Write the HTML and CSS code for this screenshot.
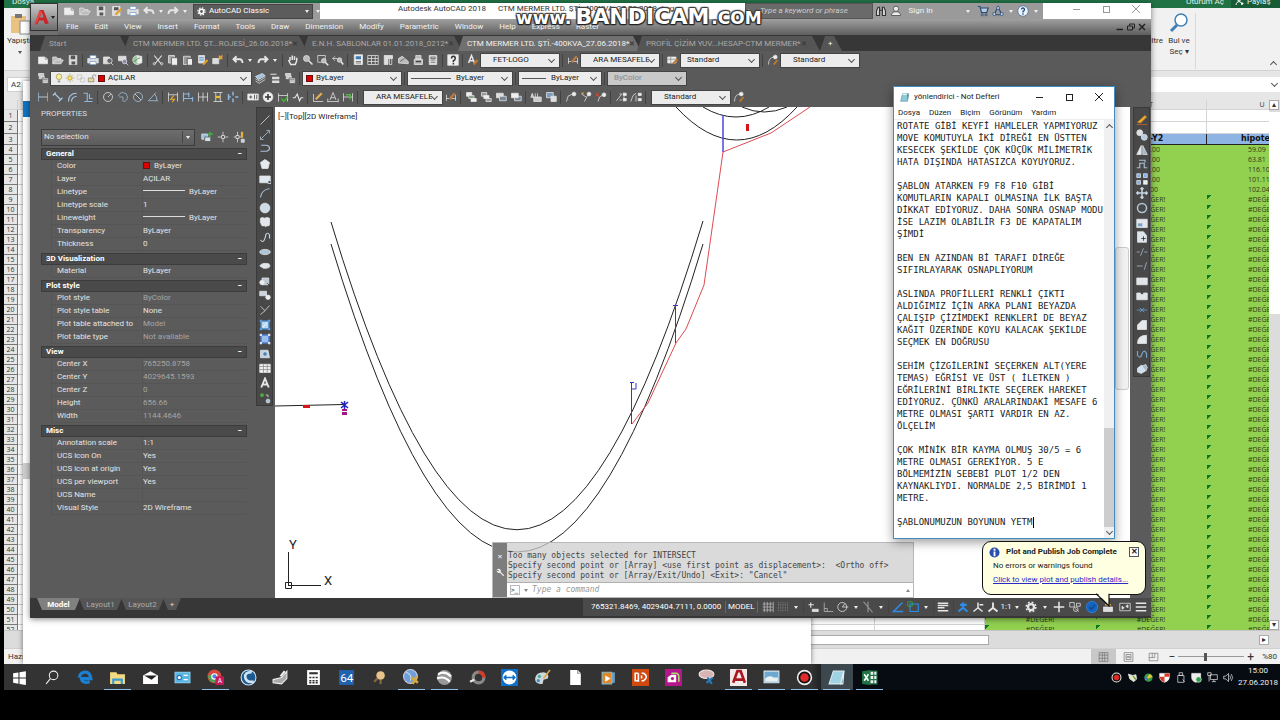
FILE: index.html
```html
<!DOCTYPE html>
<html lang="tr">
<head>
    <meta charset="UTF-8">
    <meta name="viewport" content="width=device-width, initial-scale=1.0">
    <title>Autodesk AutoCAD 2018</title>
    <link rel="stylesheet" href="styles.css">
</head>
<body>
    <div class="desktop">

        <!-- Excel -->
        <section class="window excel">
            <div class="excel-title">
                <span>Dosya</span>
                <span class="signin">Oturum Aç</span>
                <span class="share"><svg viewBox="0 0 16 16"><circle cx="7" cy="3" r="3"/><path d="M1 14c1-9 11-9 12 0M11 11h5M13 8v6"/></svg>Paylaş</span>
            </div>
            <div class="ribbon">
                <button class="paste">
                    <svg viewBox="0 0 22 22"><rect x="2" y="3" width="15" height="17" fill="#eac282"/><rect x="6" y="1" width="7" height="4" fill="#777"/><rect x="11" y="8" width="10" height="13" fill="#fff" stroke="#888"/></svg>
                    Yapıştır<i class="arrow dark"></i>
                </button>
                <span class="filter">Filtre</span>
                <button class="find">
                    <svg viewBox="0 0 20 20"><circle cx="12" cy="7" r="6" fill="#fff" stroke="#3f7fb5" stroke-width="1.5"/><path d="M8 12L2 18" stroke="#3f7fb5" stroke-width="3"/></svg>
                    <span>Bul ve<br>Seç ▾</span>
                </button>
                <i class="chevron up"></i>
            </div>
            <div class="formula"><input class="name-box" aria-label="Ad kutusu" value="A2"><div class="formula-text"><i class="chevron"></i></div></div>
            <div class="sheet-area">
                <div class="sheet"><table id="sheet"></table></div>
                <div class="vscroll"><button aria-label="yukarı">▴</button><div class="vthumb"></div><button aria-label="aşağı">▾</button></div>
            </div>
            <div class="hscroll"><div class="hthumb"></div><button aria-label="sağa">▸</button></div>
            <div class="excel-status">
                <span>Hazır</span>
                <div class="views" data-icons="normal page breaks"></div>
                <span class="zoom-sign">−</span><input type="range" class="zoom" aria-label="Yakınlaştırma" value="40"><span class="zoom-sign">+</span>
                <span class="zoom-value">%80</span>
            </div>
        </section>

        <section class="window blank-doc"><div class="blue"></div><div class="scroll-bit"></div></section>

        <!-- AutoCAD -->
        <section class="window acad">
            <header class="acad-head">
                <button class="logo" aria-label="AutoCAD"><svg viewBox="0 0 24 26"><path d="M2 22L9 3h5l7 18-5 1-2-5H8l-2 5z" fill="#c9252b"/><path d="M9 13l3-7 2 7z" fill="#8d8d8d"/><path d="M9 3l3 3-8 16-2 0z" fill="#e8473f"/></svg><i class="arrow"></i></button>
                <div class="head-rows">
                    <div class="titlebar">
                        <div class="qat">
                            <div class="tools" data-icons="new open save saveas print undo , redo ,"></div>
                            <label class="workspace"><svg viewBox="0 0 16 16"><circle cx="8" cy="8" r="4" fill="none" stroke="#fff" stroke-width="3"/><circle cx="8" cy="8" r="6.5" fill="none" stroke="#fff" stroke-width="2" stroke-dasharray="2.6 2.5"/></svg><select aria-label="Workspace"><option>AutoCAD Classic</option></select><i class="arrow"></i></label>
                            <i class="arrow"></i>
                        </div>
                        <div class="title"><span>Autodesk AutoCAD 2018</span><span>CTM MERMER LTD. ŞTİ.-400KVA_27.06.2018.dwg</span></div>
                        <div class="search"><i>▸</i><input aria-label="Search" placeholder="Type a keyword or phrase"></div>
                        <div class="signin-bar">
                            <div class="tools" data-icons="binocular user"></div>
                            <span class="sign">Sign In</span><i class="arrow"></i>
                            <div class="tools" data-icons="cart a360 , qmark ,"></div>
                        </div>
                        <div class="win-buttons"><button aria-label="Minimize"><i class="min"></i></button><button aria-label="Maximize"><i class="max"></i></button><button aria-label="Close"><i class="close"></i></button></div>
                    </div>
                    <nav class="menubar">
                        <button>File</button><button>Edit</button><button>View</button><button>Insert</button><button>Format</button><button>Tools</button><button>Draw</button><button>Dimension</button><button>Modify</button><button>Parametric</button><button>Window</button><button>Help</button><button>Express</button><button>Raster</button>
                        <div class="doc-buttons" data-icons="mini restore closex"></div>
                    </nav>
                </div>
            </header>

            <div class="file-tabs">
                <button class="tab t-start">Start</button>
                <button class="tab t-wide">CTM MERMER LTD. ŞT...ROJESİ_26.06.2018*<b>✕</b></button>
                <button class="tab t-mid">E.N.H. SABLONLAR 01.01.2018_0212*<b>✕</b></button>
                <button class="tab t-wide active">CTM MERMER LTD. ŞTİ.-400KVA_27.06.2018*<b>✕</b></button>
                <button class="tab t-wide">PROFİL ÇİZİM YUV...HESAP-CTM MERMER*<b>✕</b></button>
                <button class="tab t-plus">+</button>
            </div>

            <div class="toolbars">
                <div class="bar">
                    <div class="tools" data-icons="new open save | print preview plot publish | cut copy paste match block | undo , redo , | pan zoom zoomwin zoomprev | props dc palette sheet markup calc | help | textstyle"></div>
                    <label class="combo w80 indent"><select aria-label="Text style"><option>FET-LOGO</option></select></label>
                    <div class="tools" data-icons="| dimstyle"></div>
                    <label class="combo w80 indent"><select aria-label="Dimension style"><option>ARA MESAFELE</option></select></label>
                    <div class="tools" data-icons="| tablestyle"></div>
                    <label class="combo w80"><select aria-label="Table style"><option>Standard</option></select></label>
                    <div class="tools" data-icons="| mleader"></div>
                    <label class="combo w80 indent"><select aria-label="Multileader style"><option>Standard</option></select></label>
                </div>
                <div class="bar">
                    <div class="tools" data-icons="layers"></div>
                    <label class="combo w200"><span class="layer-icons" data-icons="bulb sun freeze lock"></span><i class="swatch"></i><select aria-label="Layer"><option>AÇILAR</option></select></label>
                    <div class="tools" data-icons="stack layerprev layers"></div>
                    <i class="sep"></i>
                    <label class="combo w100"><i class="swatch"></i><select aria-label="Color"><option>ByLayer</option></select></label>
                    <i class="sep"></i>
                    <label class="combo w106"><i class="line"></i><select aria-label="Linetype"><option>ByLayer</option></select></label>
                    <i class="sep"></i>
                    <label class="combo w84"><i class="line short"></i><select aria-label="Lineweight"><option>ByLayer</option></select></label>
                    <i class="sep"></i>
                    <label class="combo w80 off"><select aria-label="Plot style" disabled><option>ByColor</option></select></label>
                </div>
                <div class="bar">
                    <div class="tools" data-icons="dlinear daligned darc dord | dradius djog ddia dang | dquick dbase dcont dspace dbreak | tol center inspect jogline | dedit dtext dupdate |"></div>
                    <label class="combo w80 indent"><select aria-label="Dimension style 2"><option>ARA MESAFELE</option></select></label>
                    <div class="tools" data-icons="dimstyle | front back above under | textfront hatchback | lead1 lead2 lead3 | lead4 lead5 |"></div>
                    <label class="combo w80 indent"><select aria-label="Multileader style 2"><option>Standard</option></select></label>
                    <div class="tools" data-icons="mleader"></div>
                </div>
            </div>

            <div class="workarea">
                <aside class="properties">
                    <h2>PROPERTIES</h2>
                    <div class="pick"><label><select aria-label="Selection"><option>No selection</option></select><i class="arrow"></i></label><div class="tools wide" data-icons="pickadd select quick"></div></div>
                    <h3>General<span>−</span></h3>
                    <table>
                        <tr><th>Color</th><td><i class="swatch"></i>ByLayer</td></tr>
                        <tr><th>Layer</th><td>AÇILAR</td></tr>
                        <tr><th>Linetype</th><td><i class="rule"></i>ByLayer</td></tr>
                        <tr><th>Linetype scale</th><td>1</td></tr>
                        <tr><th>Lineweight</th><td><i class="rule"></i>ByLayer</td></tr>
                        <tr><th>Transparency</th><td>ByLayer</td></tr>
                        <tr><th>Thickness</th><td>0</td></tr>
                    </table>
                    <h3>3D Visualization<span>−</span></h3>
                    <table>
                        <tr><th>Material</th><td>ByLayer</td></tr>
                    </table>
                    <h3>Plot style<span>−</span></h3>
                    <table>
                        <tr><th>Plot style</th><td class="dim">ByColor</td></tr>
                        <tr><th>Plot style table</th><td>None</td></tr>
                        <tr><th>Plot table attached to</th><td class="dim">Model</td></tr>
                        <tr><th>Plot table type</th><td class="dim">Not available</td></tr>
                    </table>
                    <h3>View<span>−</span></h3>
                    <table>
                        <tr><th>Center X</th><td class="dim">765250.8758</td></tr>
                        <tr><th>Center Y</th><td class="dim">4029645.1593</td></tr>
                        <tr><th>Center Z</th><td class="dim">0</td></tr>
                        <tr><th>Height</th><td class="dim">656.66</td></tr>
                        <tr><th>Width</th><td class="dim">1144.4646</td></tr>
                    </table>
                    <h3>Misc<span>−</span></h3>
                    <table>
                        <tr><th>Annotation scale</th><td>1:1</td></tr>
                        <tr><th>UCS icon On</th><td>Yes</td></tr>
                        <tr><th>UCS icon at origin</th><td>Yes</td></tr>
                        <tr><th>UCS per viewport</th><td>Yes</td></tr>
                        <tr><th>UCS Name</th><td></td></tr>
                        <tr><th>Visual Style</th><td>2D Wireframe</td></tr>
                    </table>
                </aside>
                <div class="tools vertical draw-tools" data-icons="line xline pline polygon rect arc circle cloud spline ellipse earc insert mkblock point hatch gradient region table mtext addsel"></div>
                <div class="canvas">
                    <svg class="drawing" viewBox="275 107 855 491" preserveAspectRatio="xMinYMin slice">
                        <g fill="none" stroke="#222">
                            <path d="M331 222Q517 838 703 221M331 244Q517 860 703 244"/>
                            <path d="M676 107Q737 173 797 107M703 107Q736 127 769 107M742 107Q764 117 787 107"/>
                            <path d="M275 406L344 404.5"/>
                            <path d="M288.5 585V552M288 585.5H321M285.5 582.5h6v6h-6z"/>
                        </g>
                        <path d="M632 424L648 403L676 343L686 329L704 285L723 152L771 133L810 107" fill="none" stroke="#dc4b50"/>
                        <path d="M723 115V152" stroke="#4a4ad8" stroke-width="1.5"/>
                        <path d="M675.5 305V343M673 305.5H678M631.5 382V424M630 382.5h4M636 383v6h-4" fill="none" stroke="#3838c8"/>
                        <path d="M746 124h3v7h-3zM303 405h7v3h-7z" fill="#d8141c"/>
                        <path d="M341 402l7 6M348 402l-7 6M344.5 401v8" stroke="#2020c0" stroke-width="1.5"/>
                        <path d="M342 409h5v2h-5zM342 412h5v3h-5z" fill="#a01880"/>
                        <text x="289" y="549" class="axis">Y</text>
                        <text x="324" y="585" class="axis">X</text>
                    </svg>
                    <div class="view-label">[−][Top][2D Wireframe]</div>
                    <div class="navbar-ghost"></div>
                    <div class="command">
                        <div class="cmd-side"><span>✕</span><svg viewBox="0 0 12 12"><path d="M2 3a3 3 0 0 1 5 3l4 4-1 1-4-4a3 3 0 0 1-4-3l2 1 1-1z" fill="#eee"/></svg></div>
                        <div class="cmd-main">
                            <pre>Too many objects selected for INTERSECT
Specify second point or [Array] &lt;use first point as displacement&gt;:  &lt;Ortho off&gt;
Specify second point or [Array/Exit/Undo] &lt;Exit&gt;: "Cancel"</pre>
                            <div class="cmd-input"><b>&gt;_</b><i class="arrow"></i><input aria-label="Command" placeholder="Type a command"><i class="arrow top"></i></div>
                        </div>
                    </div>
                </div>
                <div class="right-dock"><div class="tools vertical" data-icons="erase mcopy mirror offset array move rotate scale stretch trim extend breakpt brk join chamfer fillet blend explode"></div></div>
            </div>

            <footer class="acad-foot">
                <div class="layouts"><button class="current">Model</button><button>Layout1</button><button>Layout2</button><button class="add">+</button></div>
                <div class="status">
                    <span class="coords">765321.8469, 4029404.7111, 0.0000</span>
                    <span class="space">MODEL</span>
                    <div class="tools" data-icons="grid snap , | dyn ortho polar , iso , | track osnap , | lwt | anno1 anno2 anno3"></div>
                    <span>1:1</span>
                    <div class="tools grow" data-icons=", gear , plus iso2 perf tray full burger"></div>
                </div>
            </footer>
        </section>

        <!-- Notepad -->
        <section class="window notepad">
            <div class="np-title"><svg viewBox="0 0 16 16"><path d="M4 2h10l-2 12H1z" fill="#8fc9d6" stroke="#5a94a5"/><path d="M4 2h10v2H4z" fill="#e7f4f7"/><path d="M11 2l3 0-2 12z" fill="#54939f"/></svg><span>yönlendirici - Not Defteri</span>
                <div class="win-buttons dark"><button aria-label="Simge durumuna küçült"><i class="min"></i></button><button aria-label="Ekranı kapla"><i class="max"></i></button><button aria-label="Kapat"><i class="close"></i></button></div>
            </div>
            <nav class="np-menu"><button>Dosya</button><button>Düzen</button><button>Biçim</button><button>Görünüm</button><button>Yardım</button></nav>
            <div class="np-body">
                <textarea aria-label="Metin" spellcheck="false">ROTATE GİBİ KEYFİ HAMLELER YAPMIYORUZ
MOVE KOMUTUYLA İKİ DİREĞİ EN ÜSTTEN
KESECEK ŞEKİLDE ÇOK KÜÇÜK MİLİMETRİK
HATA DIŞINDA HATASIZCA KOYUYORUZ.

ŞABLON ATARKEN F9 F8 F10 GİBİ
KOMUTLARIN KAPALI OLMASINA İLK BAŞTA
DİKKAT EDİYORUZ. DAHA SONRA OSNAP MODU
İSE LAZIM OLABİLİR F3 DE KAPATALIM
ŞİMDİ

BEN EN AZINDAN Bİ TARAFI DİREĞE
SIFIRLAYARAK OSNAPLIYORUM

ASLINDA PROFİLLERİ RENKLİ ÇIKTI
ALDIĞIMIZ İÇİN ARKA PLANI BEYAZDA
ÇALIŞIP ÇİZİMDEKİ RENKLERİ DE BEYAZ
KAĞIT ÜZERİNDE KOYU KALACAK ŞEKİLDE
SEÇMEK EN DOĞRUSU

SEHİM ÇİZGİLERİNİ SEÇERKEN ALT(YERE
TEMAS) EĞRİSİ VE ÜST ( İLETKEN )
EĞRİLERİNİ BİRLİKTE SEÇEREK HAREKET
EDİYORUZ. ÇÜNKÜ ARALARINDAKİ MESAFE 6
METRE OLMASI ŞARTI VARDIR EN AZ.
ÖLÇELİM

ÇOK MİNİK BİR KAYMA OLMUŞ 30/5 = 6
METRE OLMASI GEREKİYOR. 5 E
BÖLMEMİZİN SEBEBİ PLOT 1/2 DEN
KAYNAKLIYDI. NORMALDE 2,5 BİRİMDİ 1
METRE.

ŞABLONUMUZUN BOYUNUN YETM</textarea>
                <i class="caret"></i>
                <div class="np-scroll"><i class="chevron up"></i><div class="np-thumb"></div><i class="chevron"></i></div>
            </div>
        </section>

        <!-- Plot notification -->
        <div class="balloon">
            <div class="balloon-head"><svg viewBox="0 0 12 12"><circle cx="6" cy="6" r="5.5" fill="#2a4fae"/><path d="M6 2v2M6 5v5" stroke="#fff" stroke-width="2"/></svg><strong>Plot and Publish Job Complete</strong><button aria-label="Close">✕</button></div>
            <p>No errors or warnings found</p>
            <p><a href="#">Click to view plot and publish details...</a></p>
            <svg class="tail" viewBox="0 0 14 14"><path d="M1 0l12 12.5V0z" fill="#ffffe1"/><path d="M0 .8L13 13V.8" fill="none" stroke="#111" stroke-width="1.2"/></svg>
        </div>

        <div class="watermark"><span class="www">www.</span>BANDICAM<span class="com">.COM</span></div>

        <!-- Taskbar -->
        <footer class="taskbar">
            <div class="apps" data-icons="start search edge folder* mail panel chrome* swirl scanner calculator b64 lamp globe* earth* gimp teamviewer paint file media ofis gallery snip acad* photo* record* notes*! excel*"></div>
            <div class="tray" data-icons="record bug idm shield usb defender net volume"></div>
            <div class="clock">15:00<br>27.06.2018</div>
        </footer>
    </div>
    <script src="script.js"></script>
</body>
</html>
```
FILE: styles.css
```css
* {
    box-sizing: border-box;
}
body {
    margin: 0;
    background-color: #000;
    font-family: Roboto, 'Open Sans', sans-serif;
    font-size: 8px;
    line-height: 12px;
    color: #333;
}
button, input, select, textarea {
    font: inherit;
    color: inherit;
    background: none;
    border: 0;
    padding: 0;
    margin: 0;
    min-width: 0;
    border-radius: 0;
    outline: none;
    appearance: none;
}
svg {
    display: block;
    flex: none;
}
i {
    font-style: normal;
}
.desktop {
    position: relative;
    height: calc(100vh - 30px);
    margin-left: 4px;
    overflow: hidden;
    background-color: #fff;
}
.window {
    position: absolute;
    overflow: hidden;
}

/* small shared parts */
.arrow {
    flex: none;
    width: 0;
    height: 0;
    border: 2px solid transparent;
    border-top: 3px solid #eee;
    border-bottom: 0;
}
.arrow.dark {
    border-top-color: #555;
}
.arrow.top {
    transform: rotate(180deg);
    border-top-color: #555;
}
.chevron {
    flex: none;
    width: 5px;
    height: 5px;
    border: solid #555;
    border-width: 0 1px 1px 0;
    transform: rotate(45deg);
}
.chevron.up {
    transform: rotate(225deg);
}
.swatch {
    flex: none;
    display: inline-block;
    width: 7px;
    height: 7px;
    background-color: #d80000;
    border: 1px solid #6b1010;
}
.tools {
    display: flex;
    align-items: center;
    color: #e6e6e6;
}
.tools button {
    width: 15px;
    height: 15px;
    display: flex;
    align-items: center;
    justify-content: center;
    flex: none;
}
.tools button svg {
    width: 12px;
    height: 12px;
}
.tools .drop {
    width: 10px;
}
.sep {
    flex: none;
    width: 1px;
    height: 13px;
    margin: 0 2px;
    background-color: #424242;
}

/* excel */
.excel {
    inset: 0 0 26px 0;
    display: flex;
    flex-direction: column;
    background-color: #f1f1f1;
}
.excel-title {
    height: 8px;
    display: flex;
    background-color: #217346;
    color: #e4f0e8;
    line-height: 4px;
    padding-left: 8px;
    overflow: hidden;
}
.excel-title .signin {
    margin-left: auto;
    padding-right: 7px;
}
.excel-title .share {
    display: flex;
    gap: 3px;
    width: 49px;
    padding-left: 4px;
    background-color: #185c37;
}
.share svg {
    width: 9px;
    height: 8px;
    margin-top: -2px;
    fill: none;
    stroke: #fff;
    stroke-width: 2px;
}
.ribbon {
    height: 63px;
    display: flex;
    align-items: flex-start;
    border-bottom: 1px solid #d2d2d2;
    padding: 5px 4px 0 3px;
}
.ribbon .chevron {
    align-self: flex-end;
    margin: 0 0 3px 75px;
}
.paste {
    display: flex;
    flex-direction: column;
    align-items: center;
    line-height: 12px;
}
.paste svg {
    width: 22px;
    height: 22px;
}
.paste .arrow {
    margin-top: 4px;
}
.filter {
    margin: 22px 0 0 auto;
}
.find {
    display: flex;
    flex-direction: column;
    align-items: center;
    width: 33px;
    height: 56px;
    border-right: 1px solid #dadada;
    line-height: 11px;
}
.find svg {
    width: 20px;
    height: 20px;
    margin-bottom: 2px;
}
.formula {
    display: flex;
    gap: 30px;
    height: 29px;
    padding: 6px 0 8px 3px;
    background-color: #e6e6e6;
}
.name-box {
    width: 50px;
    background-color: #fff;
    border: 1px solid #d0d0d0;
    padding-left: 3px;
}
.formula-text {
    flex: 1;
    display: flex;
    justify-content: flex-end;
    background-color: #fff;
    padding: 4px 3px;
}
.sheet-area {
    flex: 1;
    min-height: 0;
    display: flex;
}
.sheet {
    flex: 1;
    overflow: hidden;
    background-color: #fff;
}
.sheet table {
    width: 1314px;
    table-layout: fixed;
    border-collapse: separate;
    border-spacing: 0;
    font-family: 'Open Sans', sans-serif;
    line-height: 9px;
    font-size: 7px;
}
.sheet th, .sheet td {
    height: 10px;
    padding: 0;
    text-align: center;
    white-space: nowrap;
    border: solid #d4d4d4;
    border-width: 0 1px 1px 0;
}
.sheet th {
    font-weight: normal;
    background-color: #e6e6e6;
}
.sheet tr.tall > * {
    height: 12px;
}
.sheet .c-last {
    text-align: left;
    padding-left: 41px;
}
.sheet .rows-head {
    border-color: #777;
}
.sheet tr.names > * {
    height: 11px;
}
.sheet td.field {
    font: bold 8px/10px 'DejaVu Sans', sans-serif;
    color: #111;
    background-color: #8db4e2;
    border-color: #222;
}
.sheet td.field.c-last {
    padding-left: 34px;
}
.sheet td.green {
    background-color: #92d050;
    color: #2c3a1c;
    border-color: #92d050;
}
.sheet td.error {
    background-image: linear-gradient(135deg, #0a7a20 3px, transparent 3px);
}
.vscroll {
    width: 11px;
    display: flex;
    flex-direction: column;
    background-color: #dcdcdc;
}
.vscroll button, .hscroll button {
    width: 10px;
    height: 10px;
    background-color: #fff;
    border: 1px solid #ababab;
    line-height: 8px;
}
.vthumb {
    flex: 2 1 0;
    margin: 2px 0;
    background-color: #fff;
}
.vscroll::after {
    content: '';
    flex: 3 1 0;
    order: 1;
}
.vscroll button:last-child {
    order: 2;
}
.hscroll {
    height: 18px;
    display: flex;
    align-items: center;
    justify-content: space-between;
    padding: 0 11px 0 19px;
    background-color: #dcdcdc;
    border-top: 1px solid #c6c6c6;
}
.hthumb {
    width: 966px;
    height: 10px;
    background-color: #fff;
    border: 1px solid #ababab;
}
.excel-status {
    height: 16px;
    display: flex;
    align-items: center;
    padding: 0 3px 0 4px;
    border-top: 1px solid #d0d0d0;
}
.views {
    display: flex;
    margin-left: auto;
    margin-right: 2px;
    color: #666;
}
.views button {
    width: 25px;
    height: 15px;
    display: flex;
    align-items: center;
    justify-content: center;
}
.views button:first-child {
    background-color: #c8c8c8;
}
.views svg {
    width: 11px;
    height: 10px;
}
.zoom-sign {
    font-size: 12px;
}
.zoom {
    width: 66px;
    height: 10px;
    margin: 0 3px;
    background: linear-gradient(#999, #999) center / 100% 1px no-repeat;
}
.zoom::-webkit-slider-thumb {
    appearance: none;
    width: 3px;
    height: 8px;
    background-color: #555;
}
.zoom-value {
    margin-left: 8px;
}

/* empty document behind the drawing */
.blank-doc {
    left: 19px;
    top: 81px;
    bottom: 26px;
    width: 788px;
    background-color: #fff;
    box-shadow: 0 0 5px rgba(0, 0, 0, 0.5);
}
.blank-doc .blue {
    height: 16px;
    margin-top: 20px;
    background-color: #0f74c4;
}
.blank-doc .scroll-bit {
    height: 16px;
    width: 7px;
    margin-top: 346px;
    background-color: #cdcdcd;
}

/* autocad */
.acad {
    left: 26px;
    top: 3px;
    right: 129px;
    bottom: 72px;
    display: flex;
    flex-direction: column;
    background-color: #5b5b5b;
    color: #e4e4e4;
    box-shadow: 0 1px 6px rgba(0, 0, 0, 0.5);
}
.acad-head {
    display: flex;
    height: 32px;
    background-color: #6f6f6f;
}
.logo {
    width: 28px;
    height: 28px;
    display: flex;
    align-items: center;
    justify-content: center;
    border: 1px solid #333;
    background: linear-gradient(#c8c8c8, #6d6d6d);
}
.logo svg {
    width: 18px;
    height: 21px;
}
.logo .arrow {
    border-top-color: #222;
}
.head-rows {
    flex: 1;
    min-width: 0;
}
.titlebar {
    height: 16px;
    display: flex;
    background-color: #fff;
    color: #333;
}
.qat {
    display: flex;
    align-items: center;
    width: 262px;
    padding-left: 3px;
    background-color: #9a9a9a;
    color: #fff;
}
.qat .tools button {
    width: 16px;
}
.qat .tools .drop {
    width: 8px;
}
.workspace {
    display: flex;
    align-items: center;
    gap: 3px;
    width: 120px;
    height: 15px;
    margin: 0 3px 0 4px;
    padding: 0 3px;
    background-color: #5c5c5c;
    border: 1px solid #444;
}
.workspace svg {
    width: 9px;
    height: 9px;
}
.workspace select {
    flex: 1;
}
.title {
    flex: 1;
    display: flex;
    gap: 12px;
    padding-left: 78px;
    white-space: nowrap;
    overflow: hidden;
}
.search {
    display: flex;
    align-items: center;
    gap: 8px;
    width: 128px;
    padding-left: 2px;
    background-color: #6a6a6a;
    color: #ddd;
    border: 1px solid #555;
}
.search input {
    flex: 1;
    font-style: italic;
}
.search input::placeholder {
    color: #ccc;
    opacity: 1;
}
.signin-bar {
    display: flex;
    align-items: center;
    justify-content: space-between;
    width: 170px;
    padding-right: 2px;
    background-color: #9a9a9a;
    color: #f4f4f4;
}
.sign {
    margin-right: 28px;
}
.win-buttons {
    display: flex;
    justify-content: flex-end;
    width: 108px;
    color: #999;
}
.win-buttons button {
    width: 30px;
    height: 12px;
    display: flex;
    align-items: center;
    justify-content: center;
}
.win-buttons .min {
    width: 7px;
    height: 1px;
    background-color: currentColor;
}
.win-buttons .max {
    width: 7px;
    height: 7px;
    border: 1px solid currentColor;
}
.win-buttons .close {
    width: 8px;
    height: 8px;
    background:
        linear-gradient(45deg, transparent 46%, currentColor 46%, currentColor 54%, transparent 54%),
        linear-gradient(135deg, transparent 46%, currentColor 46%, currentColor 54%, transparent 54%);
}
.menubar {
    height: 16px;
    display: flex;
    align-items: center;
    gap: 16px;
    padding-left: 8px;
    background: linear-gradient(#a0a0a0, #5e5e5e);
    color: #f2f2f2;
}
.doc-buttons {
    display: flex;
    margin-left: auto;
    padding-right: 2px;
    color: #222;
}
.doc-buttons button {
    width: 11px;
}
.doc-buttons svg {
    width: 8px;
    height: 8px;
}
.file-tabs {
    height: 16px;
    display: flex;
    align-items: flex-end;
    padding-left: 10px;
    background-color: #373737;
}
.tab {
    display: flex;
    align-items: center;
    justify-content: space-between;
    height: 15px;
    padding: 0 14px 0 9px;
    margin-right: -4px;
    background-color: #555;
    color: #a8a8a8;
    white-space: nowrap;
    clip-path: polygon(0 100%, 5px 0, calc(100% - 8px) 0, 100% 100%);
}
.tab.active {
    background-color: #707070;
    color: #f0f0f0;
}
.tab b {
    font-size: 7px;
    color: #3c3c3c;
}
.t-start {
    width: 88px;
}
.t-wide {
    width: 183px;
}
.t-mid {
    width: 159px;
}
.t-plus {
    width: 22px;
    margin-left: 4px;
    padding: 0 8px;
    color: #fff;
}
.toolbars {
    padding-left: 5px;
    background-color: #5a5a5a;
}
.bar {
    display: flex;
    align-items: center;
    height: 18px;
}
.bar:last-child {
    height: 20px;
}
.bar:last-child .tools {
    padding-right: 3px;
}
.combo {
    display: flex;
    align-items: center;
    height: 15px;
    padding: 0 5px 0 3px;
    background-color: #ececec;
    border: 1px solid #444;
    color: #222;
}
.combo::after {
    content: '';
    width: 4px;
    height: 4px;
    margin-bottom: 2px;
    border: solid #555;
    border-width: 0 1px 1px 0;
    transform: rotate(45deg);
}
.combo select {
    flex: 1;
    padding-left: 3px;
    opacity: 1;
}
.combo.indent {
    padding-left: 9px;
}
.combo.off {
    background-color: #c9c9c9;
    color: #888;
}
.w80 { width: 80px; }
.w84 { width: 84px; }
.w100 { width: 100px; }
.w106 { width: 106px; }
.w200 { width: 202px; }
.line {
    width: 40px;
    height: 1px;
    background-color: #555;
    margin-right: 2px;
}
.line.short {
    width: 24px;
}
.layer-icons {
    display: flex;
    color: #777;
}
.layer-icons button {
    width: 11px;
}
.layer-icons svg {
    width: 10px;
    height: 10px;
}
.workarea {
    flex: 1;
    min-height: 0;
    display: flex;
}
.properties {
    width: 226px;
    padding: 1px 9px 0 11px;
}
.properties h2 {
    margin: 0 0 8px;
    font-size: 8px;
    line-height: 12px;
    font-weight: normal;
    color: #ddd;
}
.pick {
    display: flex;
    align-items: center;
    height: 18px;
    margin-bottom: 2px;
}
.pick label {
    display: flex;
    align-items: center;
    width: 158px;
    height: 17px;
    padding: 0 4px 0 2px;
    border: 1px solid #3c3c3c;
    background: linear-gradient(#6d6d6d, #5c5c5c);
}
.pick select {
    flex: 1;
    border-right: 1px solid #444;
    margin-right: 3px;
}
.tools.wide {
    margin-left: 4px;
}
.tools.wide button {
    width: 16px;
}
.properties h3 {
    display: flex;
    justify-content: space-between;
    margin: 0;
    padding: 0 4px 0 4px;
    height: 12px;
    font-size: 8px;
    line-height: 10px;
    color: #fff;
    background-color: #4a4a4a;
    border: 1px solid #3c3c3c;
}
.properties table {
    width: 196px;
    margin: 0 0 2px 10px;
    border-spacing: 0;
    table-layout: fixed;
}
.properties th, .properties td {
    height: 13px;
    padding: 0;
    line-height: 12px;
    border-bottom: 1px solid #555;
    border-left: 1px solid #555;
    font-weight: normal;
    text-align: left;
}
.properties th {
    width: 91px;
    padding-left: 5px;
}
.properties td .swatch {
    margin-right: 4px;
    vertical-align: -1px;
}
.properties .rule {
    display: inline-block;
    width: 42px;
    height: 1px;
    margin: 0 4px 2px 0;
    vertical-align: middle;
    background-color: #ddd;
}
.properties .dim {
    color: #a5a5a5;
}
.vertical {
    flex-direction: column;
    align-self: flex-start;
    width: 17px;
    padding-top: 5px;
    background-color: #484848;
    border: 1px solid #3a3a3a;
}
.vertical button {
    flex: 1;
}
.draw-tools {
    height: 299px;
    margin-right: 2px;
}
.canvas {
    flex: 1;
    position: relative;
    overflow: hidden;
    background-color: #fff;
}
.drawing {
    width: 100%;
    height: 100%;
}
.axis {
    font-size: 13px;
    fill: #222;
}
.view-label {
    position: absolute;
    left: 3px;
    top: 4px;
    color: #222;
}
.navbar-ghost {
    position: absolute;
    right: 1px;
    top: 140px;
    width: 14px;
    height: 143px;
    background-color: #f2f2f2;
    border: 1px solid #ccc;
    border-radius: 3px;
}
.command {
    position: absolute;
    left: 217px;
    bottom: 0;
    width: 422px;
    height: 56px;
    display: flex;
    border: 1px solid #b8b8b8;
    background-color: rgba(205, 205, 205, 0.75);
    color: #444;
    font-family: 'DejaVu Sans Mono', monospace;
}
.cmd-side {
    display: flex;
    flex-direction: column;
    align-items: center;
    gap: 4px;
    width: 14px;
    padding-top: 8px;
    background-color: #7d7d7d;
    color: #fff;
}
.cmd-side svg {
    width: 10px;
    height: 10px;
}
.cmd-main {
    flex: 1;
    min-width: 0;
    display: flex;
    flex-direction: column;
    justify-content: space-between;
}
.cmd-main pre {
    margin: 8px 0 0 1px;
    font-family: 'DejaVu Sans Mono', monospace;
    line-height: 10px;
}
.cmd-input {
    display: flex;
    align-items: center;
    gap: 4px;
    height: 15px;
    padding: 0 3px;
    background-color: #fff;
    border-top: 1px solid #b0b0b0;
}
.cmd-input b {
    width: 10px;
    line-height: 8px;
    font-size: 6px;
    border: 1px solid #bbb;
    color: #666;
}
.cmd-input .arrow {
    border-top-color: #888;
}
.cmd-input input {
    flex: 1;
    font-style: italic;
}
.cmd-input input::placeholder {
    color: #999;
    opacity: 1;
}
.right-dock {
    width: 21px;
    padding-left: 3px;
}
.right-dock .tools {
    height: 270px;
}
.acad-foot {
    height: 20px;
    display: flex;
    justify-content: space-between;
    background-color: #373737;
}
.layouts {
    display: flex;
    padding-left: 7px;
}
.layouts button {
    width: 43px;
    height: 12px;
    line-height: 11px;
    margin-right: -1px;
    background-color: #555;
    color: #aaa;
    clip-path: polygon(0 0, 100% 0, calc(100% - 5px) 100%, 5px 100%);
}
.layouts .current {
    background-color: #808080;
    color: #fff;
    font-weight: bold;
}
.layouts .add {
    width: 18px;
    color: #ddd;
}
.status {
    display: flex;
    align-items: center;
    width: 568px;
    height: 18px;
    padding: 0 2px 0 8px;
    background-color: #4a4a4a;
    color: #fff;
    white-space: nowrap;
}
.status .space {
    border: solid #666;
    border-width: 0 1px;
    margin: 0 3px 0 4px;
    padding: 0 2px;
}
.coords {
    width: 130px;
}
.status .tools .drop {
    width: 10px;
}
.status .tools.grow {
    flex: 1;
    justify-content: space-between;
}

/* notepad */
.notepad {
    right: 165px;
    top: 86px;
    width: 222px;
    height: 453px;
    display: flex;
    flex-direction: column;
    background-color: #fff;
    border: 1px solid #3c8fc0;
    box-shadow: 0 3px 10px rgba(0, 0, 0, 0.4);
    color: #222;
}
.np-title {
    display: flex;
    align-items: center;
    gap: 4px;
    height: 20px;
    padding-left: 6px;
    white-space: nowrap;
}
.np-title svg {
    width: 10px;
    height: 11px;
}
.np-title .win-buttons {
    margin-left: auto;
    color: #222;
}
.np-menu {
    display: flex;
    gap: 9px;
    height: 12px;
    padding-left: 4px;
}
.np-body {
    flex: 1;
    position: relative;
    display: flex;
    min-height: 0;
    border-top: 1px solid #eee;
}
.np-body textarea {
    flex: 1;
    padding: 0 0 0 3px;
    resize: none;
    overflow: hidden;
    white-space: pre;
    font: 9px/12px 'DejaVu Sans Mono', monospace;
}
.caret {
    position: absolute;
    left: 139px;
    top: 397px;
    width: 1px;
    height: 11px;
    background-color: #000;
}
.np-scroll {
    display: flex;
    flex-direction: column;
    align-items: center;
    width: 10px;
    padding: 5px 0 4px;
    background-color: #f0f0f0;
}
.np-thumb {
    width: 10px;
    height: 99px;
    margin: auto 0 2px;
    background-color: #cdcdcd;
}

/* balloon */
.balloon {
    position: absolute;
    right: 134px;
    top: 541px;
    width: 164px;
    height: 54px;
    padding: 4px 6px 0 10px;
    color: #222;
    background-color: #ffffe1;
    border: 1px solid #111;
    border-radius: 9px;
}
.balloon p {
    margin: 2px 0 0;
}
.balloon a {
    color: #2a2ac8;
}
.balloon-head {
    display: flex;
    align-items: center;
    gap: 6px;
    margin-left: -4px;
    white-space: nowrap;
}
.balloon-head svg {
    width: 11px;
    height: 11px;
}
.balloon-head button {
    flex: none;
    width: 10px;
    height: 10px;
    margin-left: auto;
    line-height: 8px;
    font-weight: bold;
    border: 1px solid #555;
    background-color: #fff;
}
.tail {
    position: absolute;
    left: 113px;
    top: 51px;
    width: 14px;
    height: 14px;
}

/* recorder watermark */
.watermark {
    position: absolute;
    left: 512px;
    top: 5px;
    font: bold 22px/24px 'DejaVu Sans', sans-serif;
    color: #fff;
    white-space: nowrap;
    text-shadow: 0 0 2px #222, 1px 1px 1px #222, -1px -1px 1px #444, 1px -1px 1px #444, -1px 1px 1px #222;
}
.www {
    margin-right: 4px;
    font-size: 18px;
}
.com {
    margin-left: 2px;
    font-size: 17px;
}

/* taskbar */
.taskbar {
    position: absolute;
    inset: auto 0 0 0;
    height: 26px;
    display: flex;
    align-items: center;
    background: linear-gradient(90deg, #333 807px, #060c12 830px);
    color: #eee;
}
.apps {
    display: flex;
    width: 883px;
    height: 26px;
    margin-left: -1px;
}
.apps button {
    flex: 1;
    display: flex;
    align-items: center;
    justify-content: center;
}
.apps button svg {
    width: 17px;
    height: 17px;
}
.apps .running {
    background: linear-gradient(#8fc0e8, #8fc0e8) center bottom / 27px 1px no-repeat;
}
.apps .focused {
    background-color: #3d474e;
}
.tray {
    display: flex;
    margin-left: auto;
}
.tray button {
    width: 16px;
}
.tray svg {
    width: 11px;
    height: 11px;
    margin: auto;
}
.clock {
    width: 44px;
    text-align: center;
    line-height: 12px;
    white-space: nowrap;
}
```
FILE: script.js
```js
// Icon shapes, all on a 16 x 16 grid. Strokes use the text colour unless set.
const icons = {
    // standard toolbar
    new: '<path d="M2 4h9l3 3v6H2z" fill="#eee"/><path d="M11 4v3h3" stroke="#888"/>',
    open: '<path d="M1 13V4h5l1 2h5v2M1 13l4-5h10l-3 5z" fill="#bbb"/>',
    save: '<path d="M3 2h10v12H3z" fill="#ddd"/><path d="M5 2h6v5H5zM6 10h5v4H6z" fill="#555" stroke="none"/>',
    saveas: '<path d="M2 2h10v12H2z" fill="#ddd"/><path d="M4 3h6v4H4z" fill="#555" stroke="none"/><path d="M6 13l8-8" stroke="#e0a030" stroke-width="3"/>',
    print: '<path d="M1 6h14v6H1z" fill="#ddd"/><path d="M4 2h8v4H4zM4 10h8v4H4z" fill="#fff" stroke="#7aa3cc"/>',
    preview: '<path d="M2 4h8v9H2z" fill="#ddd"/><circle cx="10" cy="9" r="3.5" fill="#666"/><path d="M12 12l3 3"/>',
    plot: '<path d="M2 3h10v6H2z" fill="#ddd"/><circle cx="10" cy="10" r="3" fill="#88a"/><path d="M12 12l3 3"/>',
    publish: '<circle cx="7" cy="8" r="6" fill="#9bc49b"/><path d="M7 3h6v9H7z" fill="#eee"/><path d="M2 10c3 0 4-4 9-5" stroke="#3a8a3a"/>',
    cut: '<path d="M3 2l9 11M13 2L4 13" stroke-width="1.5"/><circle cx="3" cy="13" r="1.5"/><circle cx="13" cy="13" r="1.5"/>',
    copy: '<path d="M2 2h8v10H2z" fill="#aaa"/><path d="M6 5h8v10H6z" fill="#eee" stroke="#555"/>',
    paste: '<path d="M2 3h9v11H2z" fill="#999"/><path d="M7 6h7v9H7z" fill="#eee" stroke="#444"/>',
    match: '<path d="M2 2h8v10H2z" fill="#cfe0f0"/><path d="M3 5h6M3 8h6" stroke="#3a70b0"/><path d="M8 14l6-6" stroke="#e0a030" stroke-width="3"/>',
    block: '<path d="M1 6h8v7H1z" fill="#ddd"/><path d="M9 7l5-5M14 6h-4V2" stroke="#eba63c" stroke-width="2"/>',
    undo: '<path d="M2 7h8q4 0 4 5M6 3L2 7l4 4" stroke-width="2.5"/>',
    redo: '<path d="M14 7H6q-4 0-4 5M10 3l4 4-4 4" stroke-width="2.5"/>',
    pan: '<path d="M4 9V4M7 8V2M10 8V3M13 9V5M2 8l3 6h6l2-5" stroke-width="2"/>',
    zoom: '<circle cx="6" cy="6" r="4" fill="#bbb"/><path d="M9 9l5 5" stroke-width="2"/>',
    zoomwin: '<path d="M1 2h10v9H1z"/><circle cx="9" cy="9" r="3" fill="#bbb"/><path d="M11 11l4 4" stroke-width="2"/>',
    zoomprev: '<path d="M1 6h6M4 3L1 6l3 3"/><circle cx="10" cy="8" r="3" fill="#bbb"/><path d="M12 10l3 4" stroke-width="2"/>',
    props: '<path d="M3 1h11v13H3z" fill="#eee"/><path d="M5 3h7v4H5z" fill="#3d79b4" stroke="none"/><path d="M5 10h7M5 12h7" stroke="#555"/>',
    dc: '<path d="M1 2h14v12H1zM6 2v12M11 2v12M1 6h14M1 10h14"/>',
    palette: '<path d="M3 2h11v4H8v8H3z" fill="#ddd"/><path d="M10 6v8h3V6"/>',
    sheet: '<path d="M2 12V6l5-3 8 7v3z" fill="#bbb"/><path d="M4 10l6-4" stroke="#555"/>',
    markup: '<path d="M3 7h11v7H3zM5 2h7v5H5z" fill="#bbb"/><path d="M5 10h7" stroke="#444" stroke-width="2"/>',
    calc: '<path d="M3 2h10v12H3z" fill="#ddd"/><path d="M5 4h6v2H5zM5 8h6M5 11h6" stroke="#555"/>',
    help: '<path d="M1 1h14v14H1z" fill="#eee"/><path d="M6 6q0-3 2.5-3T11 6q0 2-2.5 3v2M8.5 12v2" stroke="#333" stroke-width="2"/>',
    textstyle: '<path d="M2 12L6 2l4 10M3 9h6" stroke-width="2"/><path d="M9 14l5-6" stroke="#c07830" stroke-width="3"/>',
    dimstyle: '<path d="M2 5v8M14 5v8M2 10h12"/><path d="M6 11l7-8" stroke="#b87840" stroke-width="3"/>',
    tablestyle: '<path d="M1 4h11v8H1z" fill="#eee"/><path d="M1 7h11M5 4v8" stroke="#888"/><path d="M8 13l6-6" stroke="#c07830" stroke-width="3"/>',
    mleader: '<path d="M2 14q0-9 7-10"/><circle cx="11" cy="4" r="2.5" fill="#eee"/><path d="M9 14l5-6" stroke="#c07830" stroke-width="2.5"/>',
    // layers
    layers: '<path d="M2 2h7v3H2zM3 6h7v3H3z" fill="#ccc"/><path d="M7 8h8v7H7z" fill="#eee" stroke="#555"/><path d="M8 10h6M8 12h6" stroke="#777"/>',
    stack: '<path d="M2 6l9-4 4 3-9 5z" fill="#9fc3e4"/><path d="M2 9l5 3 8-5M2 12l5 3 8-5"/>',
    layerprev: '<path d="M2 3h8M5 7h8v2H5zM5 12h8v2H5z" fill="#ccc" stroke-width="1.5"/>',
    bulb: '<circle cx="8" cy="6" r="4.5" fill="#f7eda0" stroke="#998a30"/><path d="M6 12h4v3H6z" fill="#999" stroke="none"/>',
    sun: '<circle cx="8" cy="8" r="3.5" fill="#f6e070" stroke="#a08820"/><path d="M8 1v2M8 13v2M1 8h2M13 8h2M3 3l1 1M12 12l1 1M13 3l-1 1M3 13l1-1" stroke="#a08820"/>',
    freeze: '<path d="M2 3h7v7H2zM7 8h7v6H7z" stroke="#bbb"/>',
    lock: '<path d="M2 8h9v6H2z" fill="#e8d890"/><path d="M9 8V4q2-3 5 0v2"/>',
    // dimensions
    dlinear: '<path d="M2 2v12M14 2v12" stroke="#8db8de"/><path d="M2 8h12"/>',
    daligned: '<path d="M3 3l9 9M1 6l4-4M9 14l5-5" stroke="#a8c8e4" stroke-width="1.5"/>',
    darc: '<path d="M2 14Q2 3 13 3M6 14q0-6 7-7" stroke="#a8c8e4" stroke-width="1.5"/>',
    dord: '<path d="M2 3h5v11M14 14H3M10 4v6h4" stroke="#8db8de" stroke-width="1.5"/>',
    dradius: '<circle cx="8" cy="8" r="6"/><path d="M8 8l4-4"/>',
    djog: '<path d="M2 7a6 6 0 1 1 7 7M8 14V8H3" stroke="#9fc0de"/>',
    ddia: '<circle cx="8" cy="8" r="6" stroke="#a8c8e4"/><path d="M4 4l8 8"/>',
    dang: '<path d="M12 2L2 13h13M10 4q4 4 3 9" stroke="#a8c8e4"/>',
    dquick: '<path d="M2 2v12M14 2v12M2 5h12"/><path d="M9 6l-4 5h5l-3 4" stroke="#f0b030" stroke-width="1.5"/>',
    dbase: '<path d="M2 2v12M9 2v6M14 8v6M2 4h8M2 10h12" stroke="#8db8de" stroke-width="1.5"/>',
    dcont: '<path d="M2 2v12M8 2v12M14 2v12M2 8h12"/>',
    dspace: '<path d="M2 2h12M2 14h12M5 2v12M11 2v12"/><path d="M5 8h6" stroke="#e8c030" stroke-width="3"/>',
    dbreak: '<path d="M8 1v5M8 10v5M1 8h4M11 8h4M2 4v8" stroke="#8db8de" stroke-width="2"/>',
    tol: '<path d="M1 4h14v8H1z" fill="#eee"/><path d="M3 8h4M5 6v4M10 5v6M13 5v6" stroke="#333"/>',
    center: '<circle cx="8" cy="8" r="6.5" fill="#eee"/><path d="M8 4v8M4 8h8" stroke="#333" stroke-width="2"/>',
    inspect: '<path d="M2 3v11M14 3v11M2 6h12"/><path d="M6 10l3 4 5-6" stroke="#42b030" stroke-width="2"/>',
    jogline: '<path d="M1 9h3l3-5 3 9 2-4h3" stroke-width="1.5"/>',
    dedit: '<path d="M2 4v10h13"/><path d="M5 11l8-8" stroke="#e0b050" stroke-width="3"/>',
    dtext: '<path d="M1 14h14M4 12l4-10 4 10M5 9h6M1 10v5M15 10v5"/>',
    dupdate: '<path d="M2 3v11M14 3v11M2 8h12"/><path d="M5 5h6v6" stroke="#58b048" stroke-width="2"/>',
    front: '<path d="M2 2h7v5H2z" fill="#eee"/><path d="M5 6h7v4H5z" fill="#7fa58a"/><path d="M8 10h7v4H8z" fill="#eee"/>',
    back: '<path d="M2 2h7v5H2z" fill="#999"/><path d="M5 6h7v4H5z" fill="#eee"/><path d="M8 10h7v4H8z" fill="#999"/>',
    above: '<path d="M2 3h9v6H2z" fill="#ddd"/><path d="M6 7h9v6H6z" fill="#789"/>',
    under: '<path d="M6 7h9v6H6z" fill="#789"/><path d="M2 3h9v6H2z" fill="#eee"/>',
    textfront: '<path d="M1 9l2-6 2 6M7 3v6M10 3v6M5 8h10v6H5z" fill="#ccc"/>',
    hatchback: '<path d="M2 2h9v7H2z" fill="#7c9cbd"/><path d="M8 7h7v7H8z" fill="#ddd"/>',
    lead1: '<path d="M2 14L4 7l6-3"/><circle cx="12" cy="4" r="2.5" fill="#eee"/>',
    lead2: '<path d="M6 14L10 6M2 4l6 4"/><circle cx="12" cy="4" r="2.5" fill="#eee"/><path d="M2 3h3" stroke="#e0a030" stroke-width="2"/>',
    lead3: '<path d="M4 14L6 8l5-3"/><circle cx="12" cy="5" r="2.5" fill="#eee"/><path d="M1 3l4 4M5 3L1 7" stroke="#c04838" stroke-width="1.5"/>',
    lead4: '<path d="M2 13l4-5 3-4M6 4h3M6 12h3M12 2v12"/><path d="M11 3h4v3h-4zM11 10h4v3h-4z" fill="#eee"/>',
    lead5: '<path d="M1 14l3-8 4-3M8 6v8"/><path d="M11 3h4v3h-4zM11 10h4v3h-4z" fill="#eee"/>',
    // title bar
    binocular: '<path d="M2 14V8l2-5h2v11zM10 14V3h2l2 5v6zM6 7h4" stroke="#333" fill="#ddd" stroke-width="1.5"/>',
    user: '<circle cx="8" cy="5" r="3.5" fill="#eee" stroke="#444"/><path d="M2 14q0-5 6-5t6 5z" fill="#eee" stroke="#444"/>',
    cart: '<path d="M1 2h3l2 8h7l2-6H5" stroke="#234a7a" fill="#bcd" stroke-width="1.5"/><circle cx="7" cy="13" r="1.5" stroke="#234a7a"/><circle cx="12" cy="13" r="1.5" stroke="#234a7a"/>',
    a360: '<path d="M8 2l5 11H3z" stroke="#2a4a78" stroke-width="1.5"/><circle cx="8" cy="4" r="2" fill="#cde" stroke="#2a4a78"/><circle cx="3" cy="12" r="2" fill="#cde" stroke="#2a4a78"/><circle cx="13" cy="12" r="2" fill="#cde" stroke="#2a4a78"/>',
    qmark: '<circle cx="8" cy="8" r="7" fill="#eef3fa" stroke="#4a6c98"/><path d="M6 6q0-2 2-2t2 2q0 1.5-2 2.5V10M8 11v2" stroke="#24508a" stroke-width="1.8"/>',
    mini: '<path d="M1 13h13" stroke-width="3"/>',
    restore: '<path d="M5 5V2h10v8h-4M1 6h10v8H1z" stroke-width="2"/>',
    closex: '<path d="M2 2l12 12M14 2L2 14" stroke-width="3"/>',
    // properties
    pickadd: '<path d="M1 4h8v7H1z" fill="#9ec0dd"/><path d="M5 8h8v6H5z" fill="#ddd" stroke="#456"/><path d="M12 1v7M9 4h7" stroke="#3fae3f" stroke-width="2"/>',
    select: '<path d="M8 1v5M8 10v5M1 8h5M10 8h5M6 6h4v4H6z"/>',
    quick: '<path d="M6 1v5M6 10v5M1 8h3M8 8h3M4 6h4v4H4z"/><path d="M12 1v8" stroke="#e8b040" stroke-width="3"/><path d="M11 11h4v4h-4z" fill="#ccc"/>',
    // draw
    line: '<path d="M2 14L14 2"/>',
    xline: '<path d="M3 13L13 3M2 10v4h4M14 6V2h-4" stroke="#b6cbdf"/>',
    pline: '<path d="M3 3h7q4 1 4 4t-4 4H2" stroke="#a9bfd4" stroke-width="1.5"/>',
    polygon: '<path d="M8 2l6 4-2 8H4L2 6z" fill="#e6ebf0"/>',
    rect: '<path d="M1 4h14v9H1z" fill="#dfe7ef"/><path d="M12 10h4v4h-4z" fill="#456"/>',
    arc: '<path d="M2 14Q3 4 14 2" stroke="#9db9d4" stroke-width="1.5"/>',
    circle: '<circle cx="8" cy="8" r="6.5" fill="#cfdbe6"/>',
    cloud: '<path d="M2 3q3-2 5 0 4-2 7 0v8q0 3-3 2-2 2-4 0-4 1-4-2-2-3-1-8z" fill="#e2e6ea"/>',
    spline: '<path d="M2 12q3 4 5 0t2-7q2-4 5 0v5" stroke="#c3d2e0" stroke-width="1.5"/>',
    ellipse: '<ellipse cx="8" cy="8" rx="7" ry="3.5" fill="#aec4d8"/>',
    earc: '<path d="M1 8q3-5 12-3 4 5-3 6H6z" fill="#dfe5ea"/>',
    insert: '<path d="M4 4h9v9H4z" fill="#bbc8d5"/><circle cx="4" cy="10" r="3" fill="#eee"/><path d="M11 11l4 4" stroke="#111"/>',
    mkblock: '<path d="M1 3h9v6H1z" fill="#ccd5de"/><circle cx="12" cy="11" r="3" fill="#eee"/>',
    point: '<path d="M2 3l6 6 6-7M8 9l-6 5"/>',
    hatch: '<path d="M3 3h10v10H3z" fill="#bcd8f2" stroke="#5f9bd8" stroke-width="2"/><path d="M1 1h3v3H1zM12 1h3v3h-3zM1 12h3v3H1zM12 12h3v3h-3z" fill="#5f9bd8" stroke="none"/><path d="M5 11l6-6" stroke="#fff"/>',
    gradient: '<path d="M3 3h10v10H3z" fill="#9bbcf0" stroke="#5a8ee0" stroke-width="2"/><path d="M1 1h3v3H1zM12 1h3v3h-3zM1 12h3v3H1zM12 12h3v3h-3z" fill="#dde" stroke="none"/>',
    region: '<path d="M2 3h10l2 10H2z" fill="#bdd3e8"/><circle cx="8" cy="8" r="3" fill="#4a80b8"/>',
    table: '<path d="M1 3h14v11H1z" fill="#eee"/><path d="M1 6h14M1 10h14M6 3v11M11 3v11" stroke="#888"/>',
    mtext: '<path d="M3 14L8 2l5 12M5 10h6" stroke-width="2.5"/>',
    addsel: '<circle cx="4" cy="4" r="2.5" fill="#4fae40" stroke="none"/><circle cx="12" cy="12" r="2.5" fill="#9cc4ea"/><path d="M9 4h3v3"/>',
    // modify
    erase: '<path d="M2 11L12 2l2 2-8 8z" fill="#f0b030" stroke="#c98a20"/><path d="M1 14h14" stroke="#d06030"/>',
    mcopy: '<circle cx="5" cy="5" r="4" fill="#ddd"/><circle cx="11" cy="11" r="4" fill="#b4cbe0"/>',
    mirror: '<path d="M7 2v12H1z" fill="#e4e8ec"/><path d="M9 2v12h6z" fill="#9fb4c8"/>',
    offset: '<path d="M1 13h4V7h6v6h4M4 3h8v3" stroke="#a9bfd4" stroke-width="1.5"/>',
    array: '<path d="M1 1h5v5H1zM10 1h5v5h-5zM1 10h5v5H1z" fill="#7eb0e6"/><path d="M10 10h5v5h-5z" fill="#eee"/>',
    move: '<path d="M8 1v14M1 8h14M6 3l2-2 2 2M6 13l2 2 2-2M3 6L1 8l2 2M13 6l2 2-2 2" stroke="#c8d6e4" stroke-width="2"/>',
    rotate: '<circle cx="8" cy="8" r="6" stroke="#b4c4d2" stroke-width="2"/>',
    scale: '<path d="M1 3h14v11H1z" fill="#e4e8ec"/><path d="M2 8h7v5H2z" fill="#7ba0c6"/>',
    stretch: '<path d="M2 1h8l4 5v9H2z" fill="#dde6ef"/><path d="M7 10h6M10 7v6" stroke="#222"/>',
    trim: '<path d="M1 8h4M11 8h4M6 13L10 3" stroke="#a9bfd4"/>',
    extend: '<path d="M1 8h8M11 13l3-10" stroke="#a9bfd4"/>',
    breakpt: '<path d="M1 4h14v9H1z" fill="#dfe5ea"/>',
    brk: '<path d="M1 4h5v2h4V4h5v9H1z" fill="#dfe5ea"/>',
    join: '<path d="M1 8h14M5 5l3 3-3 3M11 5L8 8l3 3" stroke="#6fa5dc"/>',
    chamfer: '<path d="M2 14V8l6-6h6v12z" fill="#e4e8ec"/>',
    fillet: '<path d="M2 14Q2 3 14 3v11z" fill="#e4e8ec"/>',
    blend: '<path d="M2 4v6q4 5 6-2t6-1v6" stroke="#7aa5cc" stroke-width="1.5"/>',
    explode: '<path d="M2 7l5-4 5 3v5l-5 3-5-2z" fill="#cfe0f0"/><path d="M8 4l5-2 2 4-2 5z" fill="#9bb8d4"/>',
    // status bar
    grid: '<path d="M3 1v14M7 1v14M11 1v14M1 4h14M1 8h14M1 12h14M15 1v14" stroke="#bbb"/>',
    snap: '<path d="M2 2v12M5 2v12M8 2v12M11 2v12M14 2v12" stroke="#999" stroke-dasharray="1 1"/>',
    dyn: '<path d="M2 5h7M5 2v7" stroke-width="1.5"/><path d="M7 11h8v3H7z" fill="#ddd"/>',
    ortho: '<path d="M3 2v12h12M3 10h4v4" stroke="#bbb"/>',
    polar: '<circle cx="7" cy="8" r="6"/><path d="M7 8h8M7 8l4-5"/>',
    iso: '<path d="M2 1l12 14M8 1v14" stroke="#999" stroke-width="1.5"/>',
    track: '<path d="M14 2L2 14h13" stroke="#2f8be6" stroke-width="2"/>',
    osnap: '<path d="M4 4h11v10H4z" stroke="#2f8be6" stroke-width="1.5"/><path d="M1 1h6v6H1z" stroke="#33b04a"/>',
    lwt: '<path d="M1 3h14M1 6h14M1 9h9M1 13h14" stroke-width="2"/>',
    anno1: '<path d="M8 2v7l-6 5M8 9l6 5M4 5h9" stroke="#2f8be6" stroke-width="3"/>',
    anno2: '<path d="M8 2v7l-6 5M8 9l6 5M10 5h5" stroke-width="2"/>',
    anno3: '<path d="M8 2v7l-6 5M8 9l6 5" stroke-width="2.5"/>',
    gear: '<circle cx="8" cy="8" r="4" stroke-width="3"/><circle cx="8" cy="8" r="6.5" stroke-width="2" stroke-dasharray="2.6 2.5"/>',
    plus: '<path d="M8 1v14M1 8h14" stroke-width="2"/>',
    iso2: '<path d="M1 2h6v6H1zM10 3h5v4h-5zM8 10l5 4"/><circle cx="9" cy="11" r="3"/>',
    perf: '<circle cx="8" cy="8" r="7.5" fill="#1464c0" stroke="#2f8be6"/><path d="M4 8l3 3 5-6" stroke="#0b4a94" stroke-width="2"/>',
    tray: '<path d="M2 8h12v6H2z" fill="#ddd"/><path d="M4 5h8" stroke="#e0a040" stroke-width="2"/>',
    full: '<path d="M1 3h14v10H1z"/><path d="M9 7l3-2v4zM7 9l-3 2V7z" fill="#ddd"/>',
    burger: '<path d="M1 3h14M1 8h14M1 13h14" stroke-width="2"/>',
    // excel views
    normal: '<path d="M1 1h14v14H1zM1 5h14M1 10h14M6 1v14M10 1v14"/>',
    page: '<path d="M1 1h14v14H1zM4 4h8v8H4zM5 7h6M5 9h6"/>',
    breaks: '<path d="M1 2h14v12H1zM6 2v7M10 2v7H1"/>',
    // taskbar
    start: '<path d="M2 4l5-.8V8H2zM8 3l6-1v6H8zM2 9h5v4.800L2 13zM8 9h6v6l-6-1z" fill="#fff" stroke="none"/>',
    search: '<circle cx="9" cy="6" r="4"/><path d="M6 9l-4 5"/>',
    edge: '<path d="M3 8q1-5 6-5 4 0 5 6H5q1 5 8 3" stroke="#1b80d2" stroke-width="3"/>',
    folder: '<path d="M1 3h6l1 2h7v9H1z" fill="#f4d983" stroke="none"/><path d="M4 14v-4h8v4" stroke="#3a9ad0" stroke-width="2"/>',
    mail: '<path d="M1 6l7-4 7 4v8H1z" fill="#fff" stroke="none"/><path d="M2 6h12l-5 4z" fill="#222" stroke="none"/>',
    panel: '<path d="M1 3h14v10H1z" fill="#58b5e4" stroke="#8bd0f0"/><circle cx="5" cy="8" r="2" fill="#fff" stroke="#2a70b0"/><path d="M9 6h4M9 10h4" stroke="#fff"/>',
    chrome: '<circle cx="7" cy="7" r="6.5" fill="#d94a3e" stroke="none"/><path d="M1 6q0 6 6 7l2-4-3-4z" fill="#4aa552" stroke="none"/><circle cx="7" cy="7" r="2.5" fill="#4a8af0" stroke="#fff"/><path d="M8 7h8v8H8z" fill="#c8185c" stroke="none"/><text x="10" y="13" font-size="6" fill="#fff" stroke="none">A</text>',
    swirl: '<circle cx="8" cy="8" r="7" fill="#1d5a90" stroke="#cfe4f4"/><path d="M11 3q-7 0-6 5t8 4" stroke="#cfe4f4" stroke-width="2.5"/>',
    scanner: '<path d="M1 10l8-2 5-6v7l-5 5-8-1z" fill="#aaa"/><path d="M8 7l4-5" stroke="#eee" stroke-width="2"/>',
    calculator: '<path d="M2 1h12v14H2z" fill="#fff" stroke="none"/><path d="M4 3h8v2H4z" fill="#333" stroke="none"/><path d="M4 8h8M4 11h8M4 13h8" stroke="#333" stroke-width="1.5" stroke-dasharray="2 1"/>',
    b64: '<path d="M1 1h14v14H1z" fill="#1f63b0" stroke="none"/><text x="2" y="12" font-size="11" fill="#fff" stroke="none">64</text>',
    lamp: '<circle cx="9" cy="6" r="4" fill="#e8c48a" stroke="none"/><path d="M6 9l-3 3M9 10v4" stroke="#8a6a40" stroke-width="2"/>',
    globe: '<circle cx="7" cy="7" r="6.5" fill="#6f9fd8" stroke="#ccd"/><path d="M3 3q6 2 4 8" stroke="#cde"/><path d="M8 8l6 5M13 7l-4 7" stroke="#d8a840" stroke-width="2.5"/>',
    earth: '<circle cx="8" cy="8" r="7" fill="#999" stroke="none"/><path d="M2 5q6-4 12 2M1 9q7-3 12 3" stroke="#fff" stroke-width="2"/>',
    gimp: '<circle cx="9" cy="8" r="5" stroke="#888" stroke-width="3"/><path d="M9 3q5 0 5 5" stroke="#d83a28" stroke-width="3"/><path d="M1 12l4-2" stroke-width="2"/>',
    teamviewer: '<path d="M0 0h16v16H0z" fill="#0e6fc8" stroke="none"/><circle cx="8" cy="8" r="6.5" fill="#fff" stroke="none"/><path d="M3 8h10M5 6L3 8l2 2M11 6l2 2-2 2" stroke="#0e6fc8" stroke-width="1.5"/>',
    paint: '<path d="M1 9q1-6 8-6 6 1 4 6l-4 1-1 4q-7 1-7-5z" fill="#cfd8d8" stroke="none"/><circle cx="5" cy="7" r="1.5" fill="#4a9" stroke="none"/><circle cx="4" cy="11" r="1.5" fill="#48c" stroke="none"/><path d="M9 9l6-8" stroke="#d8a850" stroke-width="1.5"/>',
    file: '<path d="M3 1h7l3 3v11H3z" fill="#fff" stroke="none"/><path d="M10 1v3h3" stroke="#999"/>',
    media: '<path d="M3 4l11-1v10l-11 1z" fill="#6a9cc0" stroke="none"/><path d="M2 3h9v11H2z" fill="#e08828" stroke="#8bc"/><path d="M5 6v6l5-3z" fill="#fff" stroke="none"/>',
    ofis: '<path d="M0 0h16v16H0z" fill="#d04a10" stroke="none"/><path d="M6 4H3v7h3M6 4v8M9 4h2q5 3 0 7H9M9 6v3" stroke="#fff" stroke-width="1.5"/>',
    gallery: '<path d="M0 0h16v16H0z" fill="#b4178c" stroke="none"/><path d="M3 12V8l3-2h4v6z" fill="#fff" stroke="#fff"/><path d="M6 4h5q2 1 2 3v5" stroke="#a8d870" stroke-width="1.5"/><circle cx="7" cy="9" r="1.5" fill="#b4178c" stroke="none"/>',
    snip: '<ellipse cx="8" cy="5" rx="7" ry="4" fill="#d8b4b4" stroke="#f4e8e8"/><path d="M9 8l4 6M14 8l-6 5" stroke="#2a7ab8" stroke-width="2"/>',
    acad: '<path d="M0 0h16v16H0z" fill="#f4e9e8" stroke="none"/><path d="M3 13L7 2h3l4 11M5 10h7" stroke="#a81820" stroke-width="2.5"/>',
    photo: '<path d="M1 2h14v11H1z" fill="#6ea8d0" stroke="#d8e8f0"/><path d="M2 9q4-4 8-1h4v4H2z" fill="#e8f0f0" stroke="none"/>',
    record: '<circle cx="8" cy="8" r="6.5" fill="#111" stroke="#eee" stroke-width="1.5"/><circle cx="8" cy="8" r="4" fill="#e02a2a" stroke="none"/>',
    notes: '<path d="M5 2h10l-3 12H1z" fill="#9fd2e2" stroke="#d8eef4"/><path d="M12 14l3-12-1 12z" fill="#478"/>',
    excel: '<path d="M8 2h7v12H8z" fill="#eee" stroke="#217346"/><path d="M8 6h7M8 10h7M12 2v12" stroke="#217346"/><path d="M1 2l8-1v14l-8-1z" fill="#217346" stroke="none"/><path d="M3 5l4 6M7 5l-4 6" stroke="#fff" stroke-width="1.5"/>',
    // tray
    bug: '<path d="M2 3l6 2 5-1 1 6-4 4-6-4z" fill="#e4e4c8"/><path d="M9 6l4 5" stroke="#6a9a30" stroke-width="2"/>',
    idm: '<circle cx="8" cy="8" r="6" fill="#3a9a48" stroke="none"/><path d="M2 12l8-9 4 4z" fill="#e8c838" stroke="none"/><path d="M1 8h6v5z" fill="#3a78c8" stroke="none"/>',
    shield: '<path d="M1 2h14v5q0 6-7 8-7-2-7-8z" fill="#fff"/><path d="M8 2h7v5H8zM1 7h7v8q-6-2-7-8z" fill="#d83a28" stroke="none"/>',
    usb: '<path d="M6 1h5v4H6zM4 5h9v10H4zM11 11l3 3"/>',
    defender: '<path d="M1 2h13v6q0 5-7 7-6-2-6-7z" fill="#eee"/><circle cx="11" cy="11" r="4" fill="#2e9e48"/>',
    net: '<path d="M5 4h10v7H5zM7 14h6M10 11v3M1 1h5v4H1zM3 5v9"/>',
    volume: '<path d="M1 6h3l4-4v12l-4-4H1zM10 5q2 3 0 6M12 3q4 5 0 10"/>'
};

document.querySelectorAll('[data-icons]').forEach(bar => {
    bar.dataset.icons.split(' ').forEach(entry => {
        if (entry === '|') {
            bar.insertAdjacentHTML('beforeend', '<i class="sep"></i>');
            return;
        }
        const button = document.createElement('button');
        if (entry === ',') {
            button.className = 'drop';
            button.setAttribute('aria-label', 'more');
            button.innerHTML = '<i class="arrow"></i>';
        } else {
            const name = entry.replace(/[*!]/g, '');
            button.setAttribute('aria-label', name);
            button.classList.toggle('running', entry.includes('*'));
            button.classList.toggle('focused', entry.includes('!'));
            button.innerHTML = `<svg viewBox="0 0 16 16" fill="none" stroke="currentColor">${icons[name]}</svg>`;
        }
        bar.appendChild(button);
    });
});

// Worksheet: row number, two wide columns, then the three calculated ones
const values = {
    4: ['10.00', '59.09'],
    5: ['10.00', '63.81'],
    6: ['10.00', '116.10'],
    7: ['10.00', '101.11'],
    8: ['5.00', '102.04']
};
let rows = '<colgroup><col style="width:14px"><col style="width:857px"><col style="width:110px"><col style="width:111px"><col style="width:111px"><col style="width:111px"></colgroup>';
rows += '<tr><th></th><th></th><th></th><th></th><th>T</th><th>U</th></tr>';
for (let n = 1; n <= 52; n++) {
    const head = `<th class="rows-head">${n}</th><td></td><td></td>`;
    if (n < 3) {
        rows += `<tr class="tall">${head}<td></td><td></td><td></td></tr>`;
    } else if (n === 3) {
        rows += `<tr class="names">${head}<td class="field"></td><td class="field">Y1-Y2</td><td class="field c-last">hipotenüs</td></tr>`;
    } else if (values[n]) {
        rows += `<tr>${head}<td class="green"></td><td class="green">${values[n][0]}</td><td class="green c-last">${values[n][1]}</td></tr>`;
    } else {
        rows += `<tr>${head}<td class="green error">#DEĞER!</td><td class="green error">#DEĞER!</td><td class="green error c-last">#DEĞER!</td></tr>`;
    }
}
document.getElementById('sheet').innerHTML = rows;
```
